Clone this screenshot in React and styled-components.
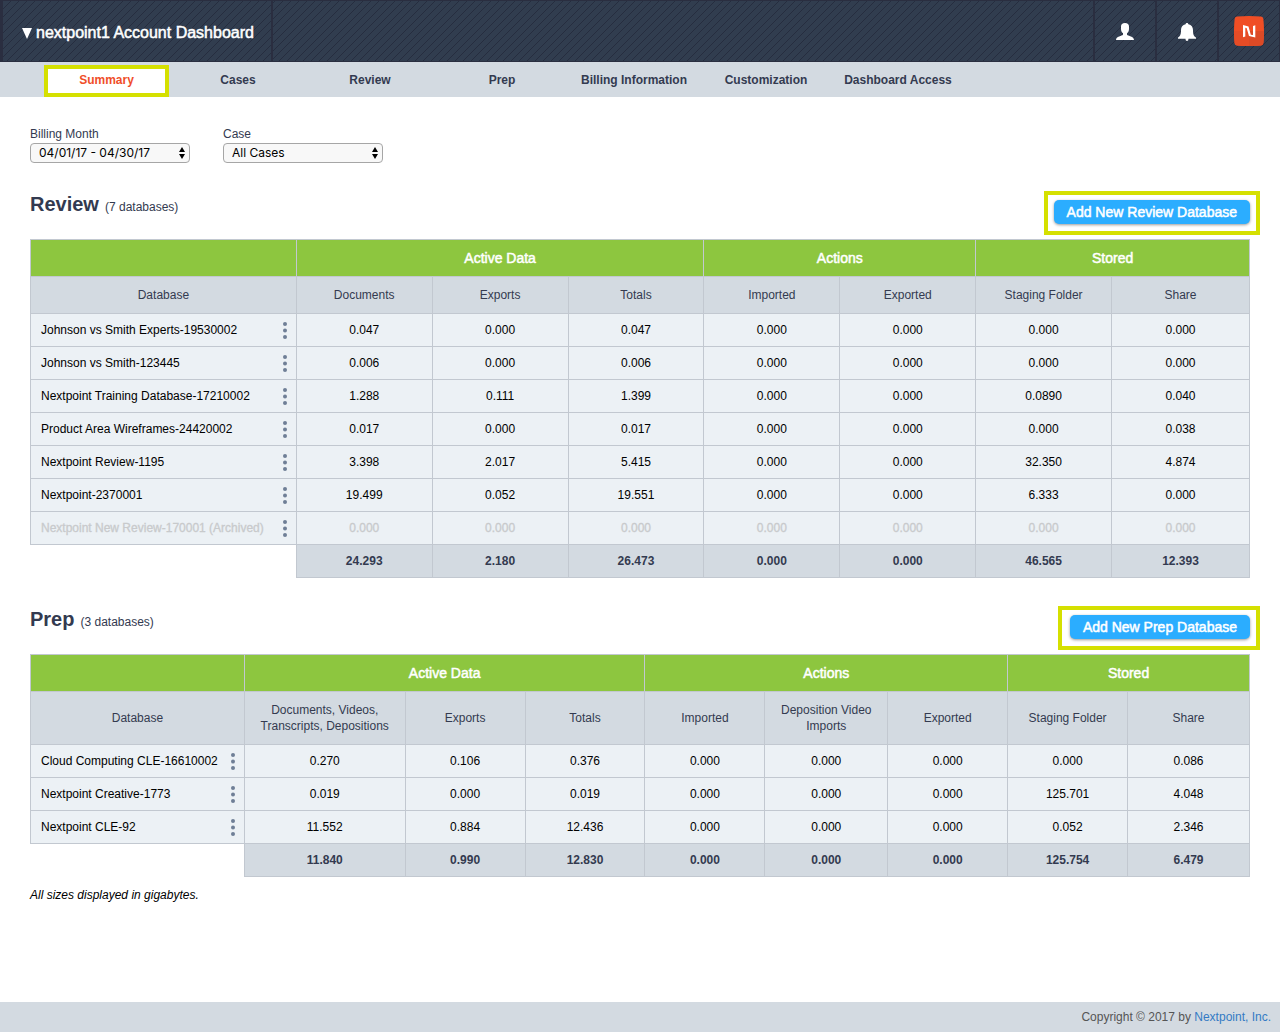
import React from "react";
import styled, { createGlobalStyle, css } from "styled-components";

const GlobalStyle = createGlobalStyle`
  * { box-sizing: border-box; }
  body {
    margin: 0;
    background: #fff;
    color: #333a50;
    font-family: "Liberation Sans", Arial, sans-serif;
    font-size: 12px;
    line-height: 16px;
  }
`;

const Page = styled.div`
  display: flex;
  flex-direction: column;
  min-height: 100vh;
`;

const TopBar = styled.header`
  display: flex;
  height: 62px;
  border: solid #2a2e40;
  border-width: 1px 1px 1px 3px;
  background-color: #313d4f;
  background-image: linear-gradient(
    135deg,
    transparent 45%,
    #262d3f 45%,
    #262d3f 55%,
    transparent 55%
  );
  background-size: 8px 8px;
`;

const TitleButton = styled.button`
  display: flex;
  align-items: center;
  gap: 4px;
  padding: 4px 17px 0 19px;
  border: 0;
  border-right: 2px solid #2a2e40;
  background: none;
  color: #fff;
  font: 16px/20px "Liberation Sans", Arial, sans-serif;
  -webkit-text-stroke: 0.5px #fff;
`;

const Tools = styled.div`
  display: flex;
  margin-left: auto;
`;

const ToolButton = styled.button`
  display: flex;
  align-items: center;
  justify-content: center;
  width: 62px;
  padding: 0;
  border: 0;
  border-left: 2px solid #2a2e40;
  background: none;
`;

const Nav = styled.nav`
  display: flex;
  height: 35px;
  padding-left: 40px;
  background: #d3dae1;
`;

const NavLink = styled.a`
  flex: 0 0 132px;
  padding-top: 10px;
  color: #333a50;
  font-weight: 700;
  text-align: center;
  text-decoration: none;
  ${(p) =>
    p.$active &&
    css`
      flex-basis: 125px;
      margin: 3px 3px 0 4px;
      padding-top: 3px;
      border: 4px solid #d5e000;
      background: #fff;
      color: #f04e29;
    `}
`;

const Main = styled.main`
  flex: 1;
  padding: 29px 30px 30px;
`;

const Filters = styled.div`
  display: flex;
  gap: 33px;
`;

const Field = styled.label`
  display: flex;
  flex-direction: column;
  gap: 1px;
  width: 160px;
`;

const SelectWrap = styled.span`
  display: grid;
  align-items: center;
  > * { grid-area: 1 / 1; }
  > svg { justify-self: end; margin-right: 4px; pointer-events: none; }
`;

const Select = styled.select`
  appearance: none;
  width: 100%;
  height: 20px;
  padding: 0 8px;
  border: 1px solid #a6a6a6;
  border-radius: 4px;
  background: #f8f8f8;
  color: #000;
  font: 12px/16px Inter, sans-serif;
`;

const SectionHead = styled.div`
  display: flex;
  justify-content: space-between;
  align-items: flex-start;
  height: 48px;
  margin: 28px -10px 0 0;
`;

const Heading = styled.h2`
  margin: 0;
  font-size: 20px;
  line-height: 26px;
`;

const Count = styled.small`
  margin-left: 6px;
  font-size: 12px;
  font-weight: 400;
`;

const Highlight = styled.div`
  padding: 5px 6px 7px ${(p) => (p.$wide ? 8 : 6)}px;
  border: 4px solid #d5e000;
`;

const AddButton = styled.button`
  display: block;
  height: 24px;
  padding: 0 13px;
  border: 0;
  border-radius: 5px;
  background: #2badff;
  box-shadow: 0 1px 3px rgba(0, 0, 0, 0.4);
  color: #fff;
  font: 14px/24px "Liberation Sans", Arial, sans-serif;
  -webkit-text-stroke: 0.5px #fff;
`;

const Table = styled.table`
  width: 100%;
  border-collapse: collapse;
  table-layout: fixed;
  text-align: center;
`;

const Col = styled.col`
  width: ${(p) => (p.$width ? `${(p.$width / 1220) * 100}%` : "auto")};
`;

const cell = css`
  padding: 0;
  border: 1px solid #c2c8d0;
`;

const GroupCell = styled.th`
  ${cell}
  height: 37px;
  background: #8dc63f;
  color: #fff;
  font-size: 14px;
  font-weight: 400;
  -webkit-text-stroke: 0.5px #fff;
`;

const HeadCell = styled.th`
  ${cell}
  height: ${(p) => (p.$tall ? 53 : 37)}px;
  background: #d3dae1;
  font-weight: 400;
  white-space: pre-line;
`;

const DataCell = styled.td`
  ${cell}
  height: 33px;
  background: #ecf1f5;
  color: #000;
  ${(p) =>
    p.$muted &&
    css`
      color: #c8cacc;
      -webkit-text-stroke: 0.3px #c8cacc;
    `}
`;

const NameRow = styled.div`
  display: flex;
  align-items: center;
  justify-content: space-between;
  padding: 0 9px 0 10px;
`;

const MenuButton = styled.button`
  display: flex;
  padding: 0;
  border: 0;
  background: none;
`;

const TotalCell = styled.td`
  ${cell}
  height: 33px;
  background: #d3dae1;
  font-weight: 700;
`;

const EmptyCell = styled.td`
  padding: 0;
`;

const Note = styled.p`
  margin: 10px 0 0;
  color: #000;
  font-style: italic;
`;

const Footer = styled.footer`
  height: 30px;
  padding: 7px 9px;
  background: #d3dae1;
  color: #555;
  text-align: right;
  a { color: #337ac4; text-decoration: none; }
`;

const tabs = ["Summary", "Cases", "Review", "Prep", "Billing Information", "Customization", "Dashboard Access"];

const review = {
  title: "Review",
  widths: [266, 136, 136, 136, 136, 136, 136, 0],
  groups: [["Active Data", 3], ["Actions", 2], ["Stored", 2]],
  heads: ["Database", "Documents", "Exports", "Totals", "Imported", "Exported", "Staging Folder", "Share"],
  rows: [
    ["Johnson vs Smith Experts-19530002", "0.047", "0.000", "0.047", "0.000", "0.000", "0.000", "0.000"],
    ["Johnson vs Smith-123445", "0.006", "0.000", "0.006", "0.000", "0.000", "0.000", "0.000"],
    ["Nextpoint Training Database-17210002", "1.288", "0.111", "1.399", "0.000", "0.000", "0.0890", "0.040"],
    ["Product Area Wireframes-24420002", "0.017", "0.000", "0.017", "0.000", "0.000", "0.000", "0.038"],
    ["Nextpoint Review-1195", "3.398", "2.017", "5.415", "0.000", "0.000", "32.350", "4.874"],
    ["Nextpoint-2370001", "19.499", "0.052", "19.551", "0.000", "0.000", "6.333", "0.000"],
    ["Nextpoint New Review-170001 (Archived)", "0.000", "0.000", "0.000", "0.000", "0.000", "0.000", "0.000"],
  ],
  totals: ["24.293", "2.180", "26.473", "0.000", "0.000", "46.565", "12.393"],
};

const prep = {
  title: "Prep",
  tall: true,
  widths: [214, 161, 120, 120, 120, 123, 120, 120, 0],
  groups: [["Active Data", 3], ["Actions", 3], ["Stored", 2]],
  heads: ["Database", "Documents, Videos,\nTranscripts, Depositions", "Exports", "Totals", "Imported", "Deposition Video\nImports", "Exported", "Staging Folder", "Share"],
  rows: [
    ["Cloud Computing CLE-16610002", "0.270", "0.106", "0.376", "0.000", "0.000", "0.000", "0.000", "0.086"],
    ["Nextpoint Creative-1773", "0.019", "0.000", "0.019", "0.000", "0.000", "0.000", "125.701", "4.048"],
    ["Nextpoint CLE-92", "11.552", "0.884", "12.436", "0.000", "0.000", "0.000", "0.052", "2.346"],
  ],
  totals: ["11.840", "0.990", "12.830", "0.000", "0.000", "0.000", "125.754", "6.479"],
};

const UserIcon = () => (
  <svg width="18" height="20" viewBox="0 -2 18 20" fill="#fff" aria-hidden="true">
    <path d="M9 0C6.400 0 5 1.300 5 3.600v2.200c0 2 .7 3.500 2 4.500v1.500C6 13 0 13.400 0 17h18c0-3.600-6-4-7-5.200v-1.500c1.300-1 2-2.500 2-4.500V3.600C13 1.300 11.600 0 9 0z" />
  </svg>
);

const BellIcon = () => (
  <svg width="18" height="20" viewBox="0 -2 18 20" fill="#fff" aria-hidden="true">
    <path d="M9 0c-.8 0-1.300.5-1.400 1.200C4.500 1.800 3 4 3 7c0 4-.4 5.800-3 7.600v1.200h7.500C7.600 17.300 8 18 9 18s1.400-.7 1.500-2.200H18v-1.200C15.400 12.800 15 11 15 7c0-3-1.500-5.200-4.600-5.800C10.300.5 9.800 0 9 0z" />
  </svg>
);

const Logo = () => (
  <svg width="30" height="30" viewBox="0 0 30 30" aria-hidden="true">
    <path d="M3 .6Q15-.6 27 .6 29.200.8 29.400 3 30.600 15 29.400 27 29.200 29.200 27 29.400 15 30.600 3 29.400.8 29.200.6 27-.6 15 .6 3 .8.8 3 .6z" fill="#f04e25" />
    <path d="M0 15h15v15Q9 30 3 29.400.8 29.200.6 27 0 21 0 15z" fill="#e64c26" />
    <path d="M15 15h14.900Q29.900 21 29.400 27 29.200 29.200 27 29.400 21 30 15 30z" fill="#dc4a26" />
    <path d="M9 9l5.500 1.500 2.300 8.200 2.200.4V10l2.300-.8v12.300L15 20l-2.400-8-1.300-.2v8.700L9 21.300z" fill="#fff" />
  </svg>
);

const Arrows = () => (
  <svg width="8" height="12" viewBox="0 0 8 12" aria-hidden="true">
    <path d="M4 0l3 5H1zM4 12l3-5H1z" />
  </svg>
);

const Dots = () => (
  <svg width="4" height="17" viewBox="0 0 4 17" fill="#6f7f96" aria-hidden="true">
    <circle cx="2" cy="2" r="2" />
    <circle cx="2" cy="8.500" r="2" />
    <circle cx="2" cy="15" r="2" />
  </svg>
);

function Filter({ label, value }) {
  return (
    <Field>
      {label}
      <SelectWrap>
        <Select defaultValue={value}>
          <option>{value}</option>
        </Select>
        <Arrows />
      </SelectWrap>
    </Field>
  );
}

function Section({ title, tall, widths, groups, heads, rows, totals }) {
  return (
    <section>
      <SectionHead>
        <Heading>
          {title}
          <Count>({rows.length} databases)</Count>
        </Heading>
        <Highlight $wide={tall}>
          <AddButton type="button">Add New {title} Database</AddButton>
        </Highlight>
      </SectionHead>
      <Table>
        <colgroup>
          {widths.map((w, i) => <Col key={i} $width={w} />)}
        </colgroup>
        <thead>
          <tr>
            <GroupCell as="td" />
            {groups.map(([name, span]) => (
              <GroupCell key={name} colSpan={span} scope="colgroup">{name}</GroupCell>
            ))}
          </tr>
          <tr>
            {heads.map((h) => <HeadCell key={h} scope="col" $tall={tall}>{h}</HeadCell>)}
          </tr>
        </thead>
        <tbody>
          {rows.map(([name, ...values]) => {
            const muted = name.includes("(Archived)");
            return (
              <tr key={name}>
                <DataCell $muted={muted}>
                  <NameRow>
                    {name}
                    <MenuButton type="button" aria-label={`Options for ${name}`}><Dots /></MenuButton>
                  </NameRow>
                </DataCell>
                {values.map((v, i) => <DataCell key={i} $muted={muted}>{v}</DataCell>)}
              </tr>
            );
          })}
        </tbody>
        <tfoot>
          <tr>
            <EmptyCell />
            {totals.map((t, i) => <TotalCell key={i}>{t}</TotalCell>)}
          </tr>
        </tfoot>
      </Table>
    </section>
  );
}

export default function App() {
  return (
    <Page>
      <GlobalStyle />
      <TopBar>
        <TitleButton type="button">
          <svg width="10" height="11" viewBox="0 0 10 11" fill="#fff" aria-hidden="true"><path d="M0 0h10L5 11z" /></svg>
          nextpoint1 Account Dashboard
        </TitleButton>
        <Tools>
          <ToolButton type="button" aria-label="Account"><UserIcon /></ToolButton>
          <ToolButton type="button" aria-label="Notifications"><BellIcon /></ToolButton>
          <ToolButton type="button" aria-label="Nextpoint"><Logo /></ToolButton>
        </Tools>
      </TopBar>
      <Nav>
        {tabs.map((t, i) => <NavLink key={t} href="#" $active={i === 0}>{t}</NavLink>)}
      </Nav>
      <Main>
        <Filters>
          <Filter label="Billing Month" value="04/01/17 - 04/30/17" />
          <Filter label="Case" value="All Cases" />
        </Filters>
        <Section {...review} />
        <Section {...prep} />
        <Note>All sizes displayed in gigabytes.</Note>
      </Main>
      <Footer>
        Copyright © 2017 by <a href="#">Nextpoint, Inc.</a>
      </Footer>
    </Page>
  );
}
